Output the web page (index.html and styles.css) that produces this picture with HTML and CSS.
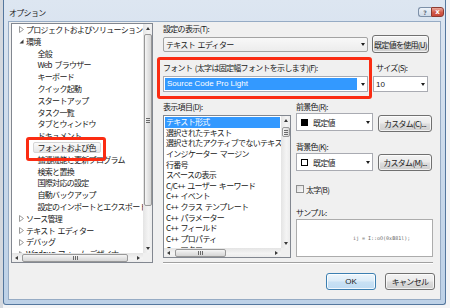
FILE: index.html
```html
<!DOCTYPE html>
<html lang="ja">
<head>
<meta charset="utf-8">
<title>オプション</title>
<link rel="stylesheet" href="styles.css">
</head>
<body>
<div class="desk">
  <div class="win">
    <div class="titlebar">
      <span class="title">オプション</span>
      <div class="caption">
        <span class="cap help">?</span>
        <span class="cap close">x</span>
      </div>
    </div>
    <div class="client">
      <div class="left">
        <div class="sv tree">
          <div class="rows tree-rows">
            <div class="trow"><svg class="tw" width="5" height="7" viewBox="0 0 5 7"><path d="M0.5 0.5 L4.5 3.5 L0.5 6.5 Z" fill="none" stroke="#9a9a9a"/></svg>プロジェクトおよびソリューション</div>
            <div class="trow"><svg class="tw" width="5" height="7" viewBox="0 0 5 7"><path d="M4.5 1.5 L4.5 5.5 L0.5 5.5 Z" fill="#3a3a3a"/></svg>環境</div>
            <div class="trow child">全般</div>
            <div class="trow child">Web ブラウザー</div>
            <div class="trow child">キーボード</div>
            <div class="trow child">クイック起動</div>
            <div class="trow child">スタートアップ</div>
            <div class="trow child">タスク一覧</div>
            <div class="trow child">タブとウィンドウ</div>
            <div class="trow child">ドキュメント</div>
            <div class="trow child"><span class="tsel">フォントおよび色</span></div>
            <div class="trow child">拡張機能と更新プログラム</div>
            <div class="trow child">検索と置換</div>
            <div class="trow child">国際対応の設定</div>
            <div class="trow child">自動バックアップ</div>
            <div class="trow child">設定のインポートとエクスポート</div>
            <div class="trow"><svg class="tw" width="5" height="7" viewBox="0 0 5 7"><path d="M0.5 0.5 L4.5 3.5 L0.5 6.5 Z" fill="none" stroke="#9a9a9a"/></svg>ソース管理</div>
            <div class="trow"><svg class="tw" width="5" height="7" viewBox="0 0 5 7"><path d="M0.5 0.5 L4.5 3.5 L0.5 6.5 Z" fill="none" stroke="#9a9a9a"/></svg>テキスト エディター</div>
            <div class="trow"><svg class="tw" width="5" height="7" viewBox="0 0 5 7"><path d="M0.5 0.5 L4.5 3.5 L0.5 6.5 Z" fill="none" stroke="#9a9a9a"/></svg>デバッグ</div>
            <div class="trow"><svg class="tw" width="5" height="7" viewBox="0 0 5 7"><path d="M0.5 0.5 L4.5 3.5 L0.5 6.5 Z" fill="none" stroke="#9a9a9a"/></svg>Windows フォーム デザイナー</div>
          </div>
          <div class="vsb">
            <span class="sa sa-up"></span>
            <div class="vtrack"><div class="vthumb tree-vthumb"></div></div>
            <span class="sa sa-down"></span>
          </div>
          <div class="hsb">
            <span class="sa sa-left"></span>
            <div class="htrack"><div class="hthumb tree-hthumb"></div></div>
            <span class="sa sa-right"></span>
          </div>
          <div class="corner"></div>
        </div>
      </div>

      <div class="right">
        <div class="lbl">設定の表示(T):</div>
        <div class="row r1">
          <div class="combo c-show"><span class="ctext">テキスト エディター</span><span class="dd"></span></div>
          <div class="btn b-default">既定値を使用(U)</div>
        </div>
        <div class="row lrow">
          <div class="lbl l-font">フォント (太字は固定幅フォントを示します)(F):</div>
          <div class="lbl">サイズ(S):</div>
        </div>
        <div class="row r2">
          <div class="combo c-font"><span class="fsel">Source Code Pro Light</span><span class="dd"></span></div>
          <div class="combo c-size"><span class="ctext latin">10</span><span class="dd"></span></div>
        </div>
        <div class="lower">
          <div class="lcol">
            <div class="lbl">表示項目(D):</div>
            <div class="sv list">
              <div class="rows list-rows">
                <div class="lrow-item sel">テキスト形式</div>
                <div class="lrow-item">選択されたテキスト</div>
                <div class="lrow-item">選択されたアクティブでないテキスト</div>
                <div class="lrow-item">インジケーター マージン</div>
                <div class="lrow-item">行番号</div>
                <div class="lrow-item">スペースの表示</div>
                <div class="lrow-item">C/C++ ユーザー キーワード</div>
                <div class="lrow-item">C++ イベント</div>
                <div class="lrow-item">C++ クラス テンプレート</div>
                <div class="lrow-item">C++ パラメーター</div>
                <div class="lrow-item">C++ フィールド</div>
                <div class="lrow-item">C++ プロパティ</div>
                <div class="lrow-item">C++ マクロ</div>
              </div>
              <div class="vsb">
                <span class="sa sa-up"></span>
                <div class="vtrack"><div class="vthumb list-vthumb"></div></div>
                <span class="sa sa-down"></span>
              </div>
              <div class="hsb">
                <span class="sa sa-left"></span>
                <div class="htrack"><div class="hthumb list-hthumb"></div></div>
                <span class="sa sa-right"></span>
              </div>
              <div class="corner"></div>
            </div>
          </div>
          <div class="rcol">
            <div class="lbl">前景色(R):</div>
            <div class="row crow">
              <div class="combo c-color"><span class="sw sw-black"></span><span class="ctext">既定値</span><span class="dd"></span></div>
              <div class="btn b-custom b-fg">カスタム(C)...</div>
            </div>
            <div class="lbl l-bg">背景色(K):</div>
            <div class="row crow">
              <div class="combo c-color"><span class="sw sw-white"></span><span class="ctext">既定値</span><span class="dd"></span></div>
              <div class="btn b-custom b-bg">カスタム(M)...</div>
            </div>
            <div class="chk-row"><span class="chk"></span><span>太字(B)</span></div>
            <div class="lbl l-sample">サンプル:</div>
            <div class="sample"><span class="sample-text">ij = I::oO(0xB81l);</span></div>
          </div>
        </div>
        <div class="sep"></div>
        <div class="row brow">
          <div class="btn b-ok">OK</div>
          <div class="btn b-cancel">キャンセル</div>
        </div>
      </div>
    </div>
  </div>
  <div class="mark mark-font"></div>
  <div class="mark mark-tree"></div>
</div>
</body>
</html>
```

FILE: styles.css
```css
* { box-sizing: border-box; }
html, body { margin: 0; padding: 0; background: #f2f3f5; }
body {
  width: 450px;
  height: 308px;
  overflow: hidden;
  font-family: "Noto Sans CJK JP", "Noto Sans", sans-serif;
  font-size: 8px;
  letter-spacing: -0.7px;
  word-spacing: 1.5px;
  color: #202020;
}
.desk {
  position: relative;
  width: 450px;
  height: 308px;
  background: linear-gradient(90deg, #d4d8de 0, #d4d8de 3px, #f3f4f6 3px);
  overflow: hidden;
}

/* window frame */
.win {
  position: relative;
  margin-left: 3px;
  width: 443px;
  height: 305px;
  border: 1px solid #54779e;
  border-top: 0;
  border-radius: 0 0 3px 3px;
  background: linear-gradient(#dde6f1, #c8d8ea 60%, #bdd1e7);
  display: flex;
  flex-direction: column;
}
.titlebar {
  height: 22px;
  padding: 2px 0 0 5px;
  display: flex;
  align-items: center;
}
.title { font-size: 8px; color: #1c1c1c; }
.caption {
  position: absolute;
  top: 7px;
  right: 1px;
  display: flex;
}
.cap {
  width: 13px;
  height: 10px;
  display: flex;
  align-items: center;
  justify-content: center;
  font-family: "DejaVu Sans", sans-serif;
  letter-spacing: 0;
}
.help {
  border: 1px solid #7d90a8;
  border-right: 0;
  border-radius: 3px 0 0 3px;
  background: linear-gradient(#eef3f9, #cfdbe9);
  color: #5f6d80;
  font-size: 6px;
  font-weight: bold;
}
.close {
  border: 1px solid #8c3a30;
  border-radius: 0 3px 3px 0;
  background: linear-gradient(#eaa89c, #d25a48 55%, #c9483a);
  color: #fff;
  font-size: 7px;
  font-weight: bold;
}

.client {
  margin: 0 5px;
  height: 277px;
  background: #f0f0f0;
  box-shadow: 0 0 0 1px #96abc4;
  display: grid;
  grid-template-columns: 154px 1fr;
}

/* scroll views */
.sv {
  border: 1px solid #828790;
  background: #fff;
  display: grid;
  grid-template-columns: 1fr 9px;
  grid-template-rows: 1fr 9px;
  overflow: hidden;
}
.rows { overflow: hidden; }
.corner { background: #f0f0f0; }
.vsb {
  display: flex;
  flex-direction: column;
  background: linear-gradient(90deg, #e4e4e4, #f4f4f4 60%, #ececec);
}
.hsb {
  display: flex;
  background: linear-gradient(#e4e4e4, #f4f4f4 60%, #ececec);
}
.vtrack { flex: 1; padding: 0 0.5px; }
.htrack { flex: 1; padding: 0.5px 0; display: flex; }
.sa {
  flex: 0 0 9px;
  width: 9px;
  height: 9px;
  display: flex;
  align-items: center;
  justify-content: center;
}
.sa::before { content: ""; width: 0; height: 0; }
.sa-up::before { border-left: 2.5px solid transparent; border-right: 2.5px solid transparent; border-bottom: 3px solid #3a3a3a; }
.sa-down::before { border-left: 2.5px solid transparent; border-right: 2.5px solid transparent; border-top: 3px solid #3a3a3a; }
.sa-left::before { border-top: 2.5px solid transparent; border-bottom: 2.5px solid transparent; border-right: 3px solid #3a3a3a; }
.sa-right::before { border-top: 2.5px solid transparent; border-bottom: 2.5px solid transparent; border-left: 3px solid #3a3a3a; }
.vthumb {
  border: 1px solid #989898;
  border-radius: 2px;
  background: linear-gradient(90deg, #f6f6f6, #e4e4e4 50%, #d6d6d6);
  display: flex;
  align-items: center;
  justify-content: center;
}
.hthumb {
  border: 1px solid #989898;
  border-radius: 2px;
  background: linear-gradient(#f6f6f6, #e4e4e4 50%, #d6d6d6);
  display: flex;
  align-items: center;
  justify-content: center;
}
.vthumb::before {
  content: "";
  width: 4px;
  height: 5px;
  background: repeating-linear-gradient(#6a6a6a 0 1px, transparent 1px 2px);
}
.hthumb::before {
  content: "";
  width: 5px;
  height: 4px;
  background: repeating-linear-gradient(90deg, #6a6a6a 0 1px, transparent 1px 2px);
}

/* tree */
.tree {
  margin: 1px 0 0 2px;
  width: 142px;
  height: 240px;
}
.tree-vthumb { margin-top: 1px; height: 172px; }
.tree-hthumb { margin-left: 1px; width: 106px; }
.trow {
  height: 11.8px;
  line-height: 11.8px;
  white-space: nowrap;
  padding-left: 7px;
  display: flex;
  align-items: center;
}
.tw { flex: 0 0 5px; margin-right: 2px; }
.trow.child { padding-left: 25.5px; }
.tsel {
  margin-left: -5px;
  padding: 0 4px;
  height: 11px;
  line-height: 9px;
  border: 1px solid #d6d6d6;
  border-radius: 2px;
  background: linear-gradient(#fafafa, #e6e6e6);
}

/* right pane */
.right {
  padding-top: 2px;
  display: flex;
  flex-direction: column;
  align-items: flex-start;
}
.lbl { height: 10px; line-height: 10px; white-space: nowrap; }
.row { display: flex; }
.r1 { margin-top: 1px; height: 18px; align-items: center; gap: 4px; }
.lrow { margin-top: 10px; }
.l-font { width: 213px; }
.r2 { margin-top: 3px; gap: 5px; }

.combo {
  display: flex;
  align-items: center;
  border: 1px solid #a9abb2;
  background: #fff;
  white-space: nowrap;
}
.ctext { padding-left: 2px; }
.latin { letter-spacing: 0; font-family: "Liberation Sans", sans-serif; }
.dd {
  margin-left: auto;
  margin-right: 2px;
  width: 0;
  height: 0;
  border-left: 2.5px solid transparent;
  border-right: 2.5px solid transparent;
  border-top: 3px solid #1e1e1e;
}
.c-show {
  width: 205px;
  height: 15px;
  border-color: #a3a3a3;
  border-radius: 2px;
  background: linear-gradient(#f8f8f8, #ececec);
}
.c-font { width: 205px; height: 16px; }
.c-size { width: 55px; height: 16px; }
.fsel {
  margin-left: 1px;
  width: 192px;
  height: 12px;
  line-height: 12px;
  padding-left: 2px;
  background: #3399ff;
  color: #fff;
  font-family: "Liberation Sans", sans-serif;
  letter-spacing: 0;
  word-spacing: 0;
  font-size: 8px;
}

.btn {
  display: flex;
  align-items: center;
  justify-content: center;
  border: 1px solid #707070;
  border-radius: 3px;
  background: linear-gradient(#f3f3f3, #ebebeb 48%, #dddddd 52%, #cfcfcf);
  box-shadow: inset 0 0 0 1px rgba(255,255,255,0.7);
  white-space: nowrap;
}
.b-default { width: 57px; height: 18px; }

.lower { margin-top: 10px; display: flex; gap: 5px; }
.list { margin-top: 3px; width: 128px; height: 143px; }
.list-rows { padding: 1px 1px 0; }
.lrow-item {
  height: 10.64px;
  line-height: 10.64px;
  padding-left: 1px;
  white-space: nowrap;
}
.lrow-item.sel { background: #3399ff; color: #fff; }
.list-vthumb { margin-top: 2px; height: 10px; }
.list-hthumb { margin-left: 2px; width: 51px; }

.rcol { width: 137px; display: flex; flex-direction: column; align-items: flex-start; }
.crow { margin-top: 1px; gap: 5px; height: 19px; align-items: flex-start; }
.c-color { width: 77px; height: 18px; padding-left: 4px; }
.sw { width: 7px; height: 7px; flex: 0 0 7px; margin-right: 3px; }
.sw-black { background: #000; }
.sw-white { background: #fff; border: 1px solid #000; }
.b-custom { width: 54px; height: 17px; }
.b-fg { margin-top: 2px; }
.b-bg { margin-top: 1px; }
.l-bg { margin-top: 10px; }
.chk-row { margin-top: 12px; height: 10px; display: flex; align-items: center; gap: 2px; }
.chk {
  width: 8px;
  height: 8px;
  border: 1px solid #8e8f8f;
  background: linear-gradient(135deg, #dcdcdc, #fbfbfb);
}
.l-sample { margin-top: 14px; }
.sample {
  margin-top: 1px;
  width: 137px;
  height: 38px;
  border: 1px solid #acacac;
  background: #fff;
  display: flex;
  align-items: center;
  padding-left: 56px;
}
.sample-text {
  font-family: "DejaVu Sans Mono", "Liberation Mono", monospace;
  font-size: 5px;
  letter-spacing: 0;
  word-spacing: 0;
  color: #6a6a6a;
  white-space: pre;
}

.sep {
  margin-top: 4px;
  width: 270px;
  height: 2px;
  border-top: 1px solid #a0a0a0;
  border-bottom: 1px solid #ffffff;
}
.brow { margin-top: 9px; align-self: flex-end; margin-right: 5px; gap: 9px; }
.b-ok, .b-cancel { width: 50px; height: 17px; }
.b-ok {
  border-color: #3c7fb1;
  background: linear-gradient(#eef6fc, #dcecf8 48%, #c9e1f4 52%, #bfdcf3);
  box-shadow: inset 0 0 0 1px rgba(255,255,255,0.8);
  letter-spacing: 0;
  font-family: "Liberation Sans", sans-serif;
}

/* annotation marks */
.mark {
  position: absolute;
  border: 3.5px solid #fb2c12;
  border-radius: 3px;
}
.mark-font { left: 157px; top: 57px; width: 215px; height: 42px; }
.mark-tree { left: 26px; top: 137px; width: 80px; height: 24px; }
```
